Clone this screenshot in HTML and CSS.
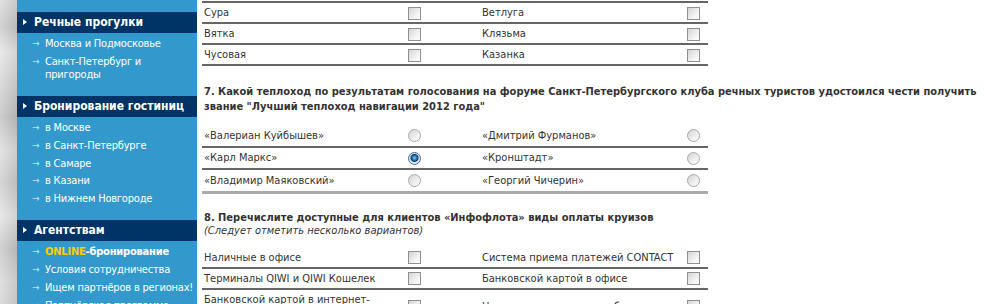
FILE: index.html
```html
<!DOCTYPE html>
<html lang="ru">
<head>
    <meta charset="UTF-8">
    <meta name="viewport" content="width=device-width, initial-scale=1.0">
    <title>Опрос</title>
    <link rel="stylesheet" href="styles.css">
</head>
<body>

<div class="page">
    <div class="strip"></div>

    <div class="sidebar">
        <div class="menu-block">
            <div class="menu-title">Речные прогулки</div>
            <ul class="menu-links">
                <li><a href="#">Москва и Подмосковье</a></li>
                <li><a href="#">Санкт-Петербург и пригороды</a></li>
            </ul>
        </div>
        <div class="menu-block">
            <div class="menu-title">Бронирование гостиниц</div>
            <ul class="menu-links">
                <li><a href="#">в Москве</a></li>
                <li><a href="#">в Санкт-Петербурге</a></li>
                <li><a href="#">в Самаре</a></li>
                <li><a href="#">в Казани</a></li>
                <li><a href="#">в Нижнем Новгороде</a></li>
            </ul>
        </div>
        <div class="menu-block">
            <div class="menu-title">Агентствам</div>
            <ul class="menu-links">
                <li><a href="#" class="strong"><span class="online">ONLINE</span>-бронирование</a></li>
                <li><a href="#">Условия сотрудничества</a></li>
                <li><a href="#">Ищем партнёров в регионах!</a></li>
                <li><a href="#">Партнёрская программа</a></li>
            </ul>
        </div>
    </div>

    <div class="content">
        <table class="answers first">
            <tr>
                <td class="label">Сура</td>
                <td class="ctrl"><input type="checkbox"></td>
                <td class="label right">Ветлуга</td>
                <td class="ctrl last"><input type="checkbox"></td>
            </tr>
            <tr>
                <td class="label">Вятка</td>
                <td class="ctrl"><input type="checkbox"></td>
                <td class="label right">Клязьма</td>
                <td class="ctrl last"><input type="checkbox"></td>
            </tr>
            <tr>
                <td class="label">Чусовая</td>
                <td class="ctrl"><input type="checkbox"></td>
                <td class="label right">Казанка</td>
                <td class="ctrl last"><input type="checkbox"></td>
            </tr>
        </table>

        <h3 class="question q7">7. Какой теплоход по результатам голосования на форуме Санкт-Петербургского клуба речных туристов удостоился чести получить звание "Лучший теплоход навигации 2012 года"</h3>

        <table class="answers radios">
            <tr>
                <td class="label">«Валериан Куйбышев»</td>
                <td class="ctrl"><input type="radio" name="q7"></td>
                <td class="label right">«Дмитрий Фурманов»</td>
                <td class="ctrl last"><input type="radio" name="q7"></td>
            </tr>
            <tr>
                <td class="label">«Карл Маркс»</td>
                <td class="ctrl"><input type="radio" name="q7" checked></td>
                <td class="label right">«Кронштадт»</td>
                <td class="ctrl last"><input type="radio" name="q7"></td>
            </tr>
            <tr>
                <td class="label">«Владимир Маяковский»</td>
                <td class="ctrl"><input type="radio" name="q7"></td>
                <td class="label right">«Георгий Чичерин»</td>
                <td class="ctrl last"><input type="radio" name="q7"></td>
            </tr>
        </table>

        <h3 class="question q8">8. Перечислите доступные для клиентов «Инфофлота» виды оплаты круизов</h3>
        <div class="hint">(Следует отметить несколько вариантов)</div>

        <table class="answers">
            <tr>
                <td class="label">Наличные в офисе</td>
                <td class="ctrl"><input type="checkbox"></td>
                <td class="label right">Система приема платежей CONTACT</td>
                <td class="ctrl last"><input type="checkbox"></td>
            </tr>
            <tr>
                <td class="label">Терминалы QIWI и QIWI Кошелек</td>
                <td class="ctrl"><input type="checkbox"></td>
                <td class="label right">Банковской картой в офисе</td>
                <td class="ctrl last"><input type="checkbox"></td>
            </tr>
            <tr>
                <td class="label">Банковской картой в интернет-магазине</td>
                <td class="ctrl"><input type="checkbox"></td>
                <td class="label right">Наличными в отделении банка</td>
                <td class="ctrl last"><input type="checkbox"></td>
            </tr>
        </table>
    </div>
</div>

</body>
</html>
```

FILE: styles.css
```css
body {
    margin: 0;
    font-family: Tahoma, "DejaVu Sans Condensed", "DejaVu Sans", sans-serif;
    font-stretch: condensed;
    font-size: 11px;
    color: #333333;
    background: #ffffff;
}
.page {
    display: flex;
    min-height: 304px;
}
/* размытая фотография слева */
.strip {
    width: 17px;
    flex: none;
    background:
        linear-gradient(90deg, rgba(255,255,255,0.25), rgba(0,0,0,0.06)),
        linear-gradient(180deg, #d8d8d8 0%, #c4c4c4 8%, #e2e2e2 16%, #cfcfcf 26%, #bdbdbd 36%,
            #dadada 46%, #c8c8c8 56%, #e0e0e0 66%, #c2c2c2 76%, #d6d6d6 86%, #cacaca 100%);
}
.sidebar {
    width: 180px;
    flex: none;
    background-color: #3399cc;
    padding-top: 12px;
}
.menu-title {
    height: 21px;
    line-height: 21px;
    padding-left: 6px;
    background-color: #003366;
    color: #ffffff;
    font-size: 12px;
    font-weight: bold;
    white-space: nowrap;
    overflow: hidden;
}
.menu-title::before {
    content: "";
    display: inline-block;
    width: 0;
    height: 0;
    margin-right: 7px;
    vertical-align: 1px;
    border-left: 4px solid #ffffff;
    border-top: 3px solid transparent;
    border-bottom: 3px solid transparent;
}
.menu-links {
    list-style: none;
    margin: 0;
    padding: 4px 0 10.5px 15px;
}
.menu-links li {
    display: flex;
    line-height: 13px;
    margin-bottom: 4.75px;
}
.menu-links li::before {
    content: "→";
    flex: none;
    width: 13px;
    font-size: 10px;
    color: #bfe0f2;
}
.menu-links a {
    color: #ffffff;
    text-decoration: none;
    letter-spacing: -0.2px;
}
.menu-links a.strong {
    font-weight: bold;
}
.online {
    color: #ffcc00;
}
.content {
    flex: 1;
    padding: 0 5px;
}
.answers {
    width: 506px;
    border-collapse: collapse;
}
.answers.first {
    border-top: 2px solid #666666;
    margin-top: 1px;
}
.answers tr {
    border-bottom: 2px solid #666666;
}
.answers td {
    padding: 3px 0 2px 0;
    line-height: 14px;
    vertical-align: middle;
}
.answers td.label {
    width: 201px;
    padding-left: 2px;
}
.answers td.label.right {
    width: 198px;
    padding-left: 7px;
}
.answers td.ctrl {
    width: 67px;
    padding-left: 3px;
}
.answers td.ctrl.last {
    width: 21px;
    padding-left: 7px;
}
.radios td {
    padding-top: 3.5px;
    padding-bottom: 3px;
}
.radios tr:last-child {
    border-bottom: 3px solid #aaaaaa;
}
.answers input {
    -webkit-appearance: none;
    appearance: none;
    display: block;
    width: 13px;
    height: 13px;
    margin: 0;
    border: 1px solid #8f8f8f;
    background: linear-gradient(135deg, #d4d4d4, #f6f6f6 70%, #ffffff);
}
.answers input[type="radio"] {
    border-radius: 50%;
    border-color: #a8a8a8;
    background: linear-gradient(135deg, #d2d2d2, #f4f4f4 70%, #ffffff);
}
.answers input[type="radio"]:checked {
    border-color: #4a6b8a;
    background: radial-gradient(circle at 50% 45%, #8fd0ff 0, #2a7fc0 2px, #0d3d6e 3.5px, #d8dde3 4.5px, #f2f2f2 6px);
}
.question {
    margin: 0 0 0 2px;
    font-size: 11px;
    font-weight: bold;
    color: #333333;
}
.q7 {
    margin-top: 18px;
    margin-bottom: 11px;
    line-height: 15px;
}
.q8 {
    margin-top: 17px;
    line-height: 13px;
}
.hint {
    margin: 0 0 10px 2px;
    line-height: 14px;
    font-style: italic;
}
```
